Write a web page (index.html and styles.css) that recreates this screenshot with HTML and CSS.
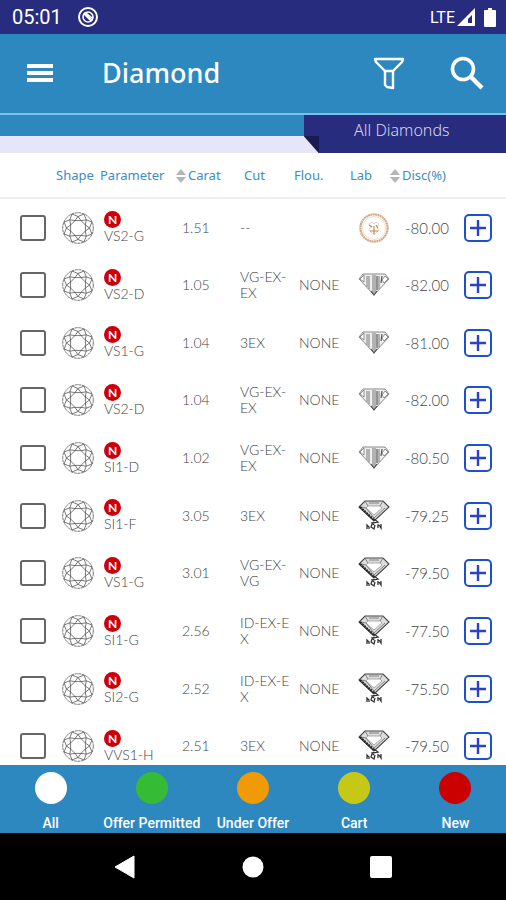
FILE: index.html
```html
<!DOCTYPE html>
<html lang="en">
<head>
  <meta charset="UTF-8">
  <meta name="viewport" content="width=device-width, initial-scale=1.0">
  <title>Diamond</title>
  <link rel="stylesheet" href="styles.css">
</head>
<body>
  <!-- Shared icons -->
  <svg class="sprite" aria-hidden="true">
    <symbol id="round" viewBox="-16 -16 32 32">
      <g fill="none" stroke="#555" stroke-width="0.8">
        <circle r="15.3" stroke-dasharray="3 0.6"/>
        <path d="M7.4 3L3 7.4L-3 7.4L-7.4 3L-7.4 -3L-3 -7.4L3 -7.4L7.4 -3Z"/>
        <path d="M7.4 3L11.5 0L7.4 -3L8.2 -8.2L3 -7.4L0 -11.5L-3 -7.4L-8.2 -8.2L-7.4 -3L-11.5 0L-7.4 3L-8.2 8.2L-3 7.4L0 11.5L3 7.4L8.2 8.2Z"/>
        <path d="M14 6L11.5 0L14 -6L8.2 -8.2L6 -14L0 -11.5L-6 -14L-8.2 -8.2L-14 -6L-11.5 0L-14 6L-8.2 8.2L-6 14L0 11.5L6 14L8.2 8.2Z"/>
      </g>
    </symbol>
    <symbol id="gia" viewBox="0 0 32 32">
      <g fill="none" stroke="#d3ab83">
        <circle cx="16" cy="16" r="13.6" stroke-width="2.2" stroke-dasharray="2 0.4"/>
        <circle cx="16" cy="16" r="11.5" stroke="#ead6c2" stroke-width="0.8"/>
        <path d="M11 12L14 10L16 12L18 10L21 12L19 15L21 18L16 23L11 18L13 15Z" stroke="#e0c4a4" stroke-width="0.8"/>
        <path d="M11 13L14 15M18 13L20 16M16 14V22M12 19H20" stroke="#b98d56" stroke-width="1.2"/>
      </g>
    </symbol>
    <symbol id="igi" viewBox="0 0 32 32">
      <path d="M5 5H27L31 10L16 26L1 10Z" fill="#efefef" stroke="#888"/>
      <path d="M9 7V18M11 7V20M15 6V25M17 6V25M21 7V20" stroke="#8a8a8a" stroke-width="1.2"/>
      <path d="M2 10L6 6V13ZM30 10L26 14L24 11L27 7Z" fill="#fff" stroke="#777" stroke-width="0.8"/>
      <path d="M19 7V21M24 7L23 14M13 22L16 26L19 22" fill="none" stroke="#555" stroke-width="1.2"/>
    </symbol>
    <symbol id="hrd" viewBox="0 0 32 32">
      <path d="M7 1H25L31 7L16 21L1 7Z" fill="#ddd" stroke="#444" stroke-width="1.1"/>
      <path d="M10 6H22L24 8L16 15L8 8Z" fill="#fff" stroke="#999" stroke-width="0.8"/>
      <path d="M3 7L8 8L16 18L27 8M7 1L10 6M25 1L22 6M11 3H21" fill="none" stroke="#777" stroke-width="0.9"/>
      <path d="M2 7L16 20" stroke="#222" stroke-width="2.2" stroke-dasharray="2 0.8"/>
      <path d="M16 19L20 22L14 23L16 25M9 29V25L11 27V29M14 24L13 27L16 29L17 25M20 24V28M21 25L23 28V24" fill="none" stroke="#333" stroke-width="1.3"/>
    </symbol>
    <symbol id="sort" viewBox="0 0 10 14">
      <path d="M5 0L10 6H0ZM5 14L0 8H10Z" fill="#b5b5b5"/>
    </symbol>
  </svg>

  <div class="status-bar">
    <span class="clock">05:01</span>
    <svg width="20" height="20" viewBox="0 0 20 20" fill="none" stroke="#fff">
      <circle cx="10" cy="10" r="9" stroke-width="2"/>
      <circle cx="10" cy="10" r="5" stroke-width="1.6"/>
      <path d="M6 6L14 14" stroke-width="2.6"/>
      <path d="M8 6L14 11" stroke-width="1.6"/>
    </svg>
    <span class="network">LTE</span>
    <svg width="18" height="18" viewBox="0 0 18 18">
      <path d="M18 0V18H0Z" fill="#fff"/>
      <path d="M15 7V15H11V11Z" fill="#282c7e"/>
    </svg>
    <svg class="battery" width="12" height="19" viewBox="0 0 12 19">
      <path d="M4 0H8V2H11Q12 2 12 3V18Q12 19 11 19H1Q0 19 0 18V3Q0 2 1 2H4Z" fill="#fff"/>
    </svg>
  </div>

  <header class="app-bar">
    <button type="button" aria-label="Menu">
      <svg width="28" height="20" viewBox="0 0 28 20">
        <path d="M1 3H27M1 10H27M1 17H27" stroke="#fff" stroke-width="4"/>
      </svg>
    </button>
    <h1>Diamond</h1>
    <button type="button" class="filter" aria-label="Filter">
      <svg width="32" height="34" viewBox="0 0 32 34" fill="none" stroke="#fff" stroke-width="2.4" stroke-linejoin="round">
        <path d="M2 3H30L29 6L20 15H12L3 6Z"/>
        <path d="M12 15V29L14 31L20 32V15"/>
      </svg>
    </button>
    <button type="button" aria-label="Search">
      <svg width="34" height="34" viewBox="0 0 34 34" fill="none" stroke="#fff">
        <circle cx="13" cy="13" r="10.5" stroke-width="3.6"/>
        <path d="M21 21L32 32" stroke-width="4.4"/>
      </svg>
    </button>
  </header>

  <div class="tab-strip">
    <div class="tab">All Diamonds</div>
  </div>

  <main class="list">
    <table>
      <colgroup>
        <col class="col-check">
        <col class="col-shape">
        <col>
        <col class="col-carat">
        <col class="col-cut">
        <col class="col-flou">
        <col class="col-lab">
        <col class="col-disc">
        <col class="col-add">
      </colgroup>
      <thead>
        <tr>
          <td></td>
          <th>Shape</th>
          <th>Parameter</th>
          <th><svg class="sort"><use href="#sort"/></svg>Carat</th>
          <th class="cut">Cut</th>
          <th>Flou.</th>
          <th class="lab">Lab</th>
          <th><svg class="sort"><use href="#sort"/></svg>Disc(%)</th>
          <td></td>
        </tr>
      </thead>
      <tbody id="stones"></tbody>
    </table>
  </main>

  <footer class="legend">
    <button type="button"><span class="dot all"></span>All</button>
    <button type="button"><span class="dot permitted"></span>Offer Permitted</button>
    <button type="button"><span class="dot under"></span>Under Offer</button>
    <button type="button"><span class="dot cart"></span>Cart</button>
    <button type="button"><span class="dot new"></span>New</button>
  </footer>

  <nav class="system-nav">
    <button type="button" aria-label="Back">
      <svg width="22" height="24" viewBox="0 0 22 24"><path d="M1 12L20 1V23Z" fill="#fff" stroke="#fff" stroke-linejoin="round"/></svg>
    </button>
    <button type="button" aria-label="Home">
      <svg width="22" height="22" viewBox="0 0 22 22"><circle cx="11" cy="11" r="10.5" fill="#fff"/></svg>
    </button>
    <button type="button" aria-label="Recent">
      <svg width="22" height="22" viewBox="0 0 22 22"><rect width="22" height="22" rx="2" fill="#fff"/></svg>
    </button>
  </nav>

  <script src="script.js"></script>
</body>
</html>
```

FILE: styles.css
```css
* {
  margin: 0;
  padding: 0;
  box-sizing: border-box;
}

body {
  display: flex;
  flex-direction: column;
  height: 100vh;
  overflow: hidden;
  background: #fff;
  font-family: Lato, sans-serif;
}

button {
  display: flex;
  align-items: center;
  justify-content: center;
  border: none;
  background: none;
  color: inherit;
  cursor: pointer;
}

svg {
  display: block;
  flex-shrink: 0;
}

.sprite {
  position: absolute;
  width: 0;
  height: 0;
}

/* Status bar */
.status-bar {
  display: flex;
  align-items: center;
  flex-shrink: 0;
  height: 34px;
  padding: 0 10px 0 12px;
  background: #282c7e;
  color: #fff;
  font-family: Roboto, sans-serif;
  font-size: 20px;
}

.clock {
  margin-right: 16px;
}

.network {
  margin-left: auto;
  margin-right: 2px;
  font-size: 16px;
}

.battery {
  margin-left: 9px;
}

/* App bar */
.app-bar {
  display: flex;
  align-items: center;
  flex-shrink: 0;
  height: 81px;
  padding: 0 22px 2px 26px;
  background: #2e88c0;
  border-bottom: 2px solid #7fbfe8;
  color: #fff;
}

.app-bar h1 {
  margin-left: 48px;
  font-family: "Noto Sans", sans-serif;
  font-size: 27px;
  font-weight: 500;
}

.filter {
  margin-left: auto;
  margin-right: 45px;
}

.tab-strip {
  display: flex;
  justify-content: flex-end;
  flex-shrink: 0;
  height: 38px;
  background: linear-gradient(#2e88c0 21px, #e6e6fb 21px);
}

.tab {
  width: 40%;
  padding-right: 6px;
  background: linear-gradient(#282c7e, #282c7e) 15px 0 no-repeat,
    linear-gradient(#282c7e 21px, #1a1b52 21px);
  clip-path: polygon(0 0, 100% 0, 100% 100%, 15px 100%, 0 21px);
  color: #d5d6ee;
  font-family: "Noto Sans", sans-serif;
  font-size: 16px;
  font-weight: 300;
  line-height: 30px;
  text-align: center;
}

/* Stones */
.list {
  flex: 1;
  min-height: 0;
  overflow: hidden;
}

table {
  width: 100%;
  table-layout: fixed;
  border-collapse: collapse;
  color: #444;
  font-size: 14px;
  font-weight: 300;
  line-height: 16px;
}

.col-check { width: 56px; }
.col-shape { width: 44px; }
.col-carat { width: 64px; }
.col-cut { width: 54px; }
.col-flou { width: 52px; }
.col-lab { width: 44px; }
.col-disc { width: 66px; }
.col-add { width: 50px; }

thead tr {
  height: 45px;
  border-bottom: 2px solid #efeffb;
}

th {
  color: #3c8dc0;
  font-family: "Noto Sans", sans-serif;
  font-size: 13px;
  font-weight: 400;
  text-align: left;
  white-space: nowrap;
}

th.cut,
th.lab {
  padding-left: 4px;
}

.sort {
  display: inline-block;
  width: 10px;
  height: 14px;
  margin-right: 2px;
  vertical-align: middle;
}

tbody tr {
  height: 58px;
}

tbody tr:nth-child(3n) {
  height: 57px;
}

.check {
  padding-left: 20px;
}

.check input {
  display: block;
  width: 26px;
  height: 26px;
  appearance: none;
  border: 2px solid #666;
  border-radius: 3px;
  background: #fff;
}

.check input:checked {
  background: #666;
}

.shape {
  padding-left: 6px;
}

.shape svg,
.lab svg {
  width: 32px;
  height: 32px;
}

.param {
  padding-left: 4px;
}

.badge {
  display: block;
  width: 17px;
  height: 17px;
  border-radius: 50%;
  background: #cb0008;
  color: #fff;
  font-size: 12px;
  font-weight: 700;
  line-height: 17px;
  text-align: center;
}

.carat {
  padding-left: 6px;
}

td.cut {
  white-space: pre-line;
}

.flou {
  padding-left: 5px;
}

td.lab {
  padding-left: 12px;
}

.disc {
  padding-left: 15px;
  font-size: 15px;
}

.add {
  padding-left: 8px;
}

.add button {
  width: 28px;
  height: 28px;
  border: 2px solid #1c50d0;
  border-radius: 5px;
}

/* Legend */
.legend {
  display: grid;
  grid-template-columns: repeat(5, 1fr);
  flex-shrink: 0;
  height: 68px;
  background: #2e88c0;
  color: #fff;
}

.legend button {
  flex-direction: column;
  justify-content: flex-start;
  gap: 10px;
  padding-top: 7px;
  font-family: Roboto, sans-serif;
  font-size: 14px;
  font-weight: 500;
  line-height: 18px;
  white-space: nowrap;
}

.dot {
  width: 32px;
  height: 32px;
  flex-shrink: 0;
  border-radius: 50%;
}

.all { background: #fff; }
.permitted { background: #36bb36; }
.under { background: #ef9a06; }
.cart { background: #c5c816; }
.new { background: #cb0000; }

.system-nav {
  display: flex;
  justify-content: space-around;
  flex-shrink: 0;
  height: 67px;
  padding: 0 12%;
  background: #000;
}

.system-nav button {
  width: 24px;
}
```

FILE: script.js
```js
const stones = [
  { param: 'VS2-G', carat: '1.51', cut: '--', flou: '', lab: 'gia', disc: '-80.00' },
  { param: 'VS2-D', carat: '1.05', cut: 'VG-EX-\nEX', flou: 'NONE', lab: 'igi', disc: '-82.00' },
  { param: 'VS1-G', carat: '1.04', cut: '3EX', flou: 'NONE', lab: 'igi', disc: '-81.00' },
  { param: 'VS2-D', carat: '1.04', cut: 'VG-EX-\nEX', flou: 'NONE', lab: 'igi', disc: '-82.00' },
  { param: 'SI1-D', carat: '1.02', cut: 'VG-EX-\nEX', flou: 'NONE', lab: 'igi', disc: '-80.50' },
  { param: 'SI1-F', carat: '3.05', cut: '3EX', flou: 'NONE', lab: 'hrd', disc: '-79.25' },
  { param: 'VS1-G', carat: '3.01', cut: 'VG-EX-\nVG', flou: 'NONE', lab: 'hrd', disc: '-79.50' },
  { param: 'SI1-G', carat: '2.56', cut: 'ID-EX-E\nX', flou: 'NONE', lab: 'hrd', disc: '-77.50' },
  { param: 'SI2-G', carat: '2.52', cut: 'ID-EX-E\nX', flou: 'NONE', lab: 'hrd', disc: '-75.50' },
  { param: 'VVS1-H', carat: '2.51', cut: '3EX', flou: 'NONE', lab: 'hrd', disc: '-79.50' }
];

// Build one table row per stone
document.getElementById('stones').innerHTML = stones.map(stone => `
  <tr>
    <td class="check"><input type="checkbox" aria-label="Select ${stone.param}"></td>
    <td class="shape"><svg><use href="#round"/></svg></td>
    <td class="param"><span class="badge">N</span>${stone.param}</td>
    <td class="carat">${stone.carat}</td>
    <td class="cut">${stone.cut}</td>
    <td class="flou">${stone.flou}</td>
    <td class="lab"><svg><use href="#${stone.lab}"/></svg></td>
    <td class="disc">${stone.disc}</td>
    <td class="add">
      <button type="button" aria-label="Add ${stone.param}">
        <svg width="16" height="16" viewBox="0 0 16 16"><path d="M8 0V16M0 8H16" stroke="#2a42c8" stroke-width="2.4"/></svg>
      </button>
    </td>
  </tr>`).join('');
```
